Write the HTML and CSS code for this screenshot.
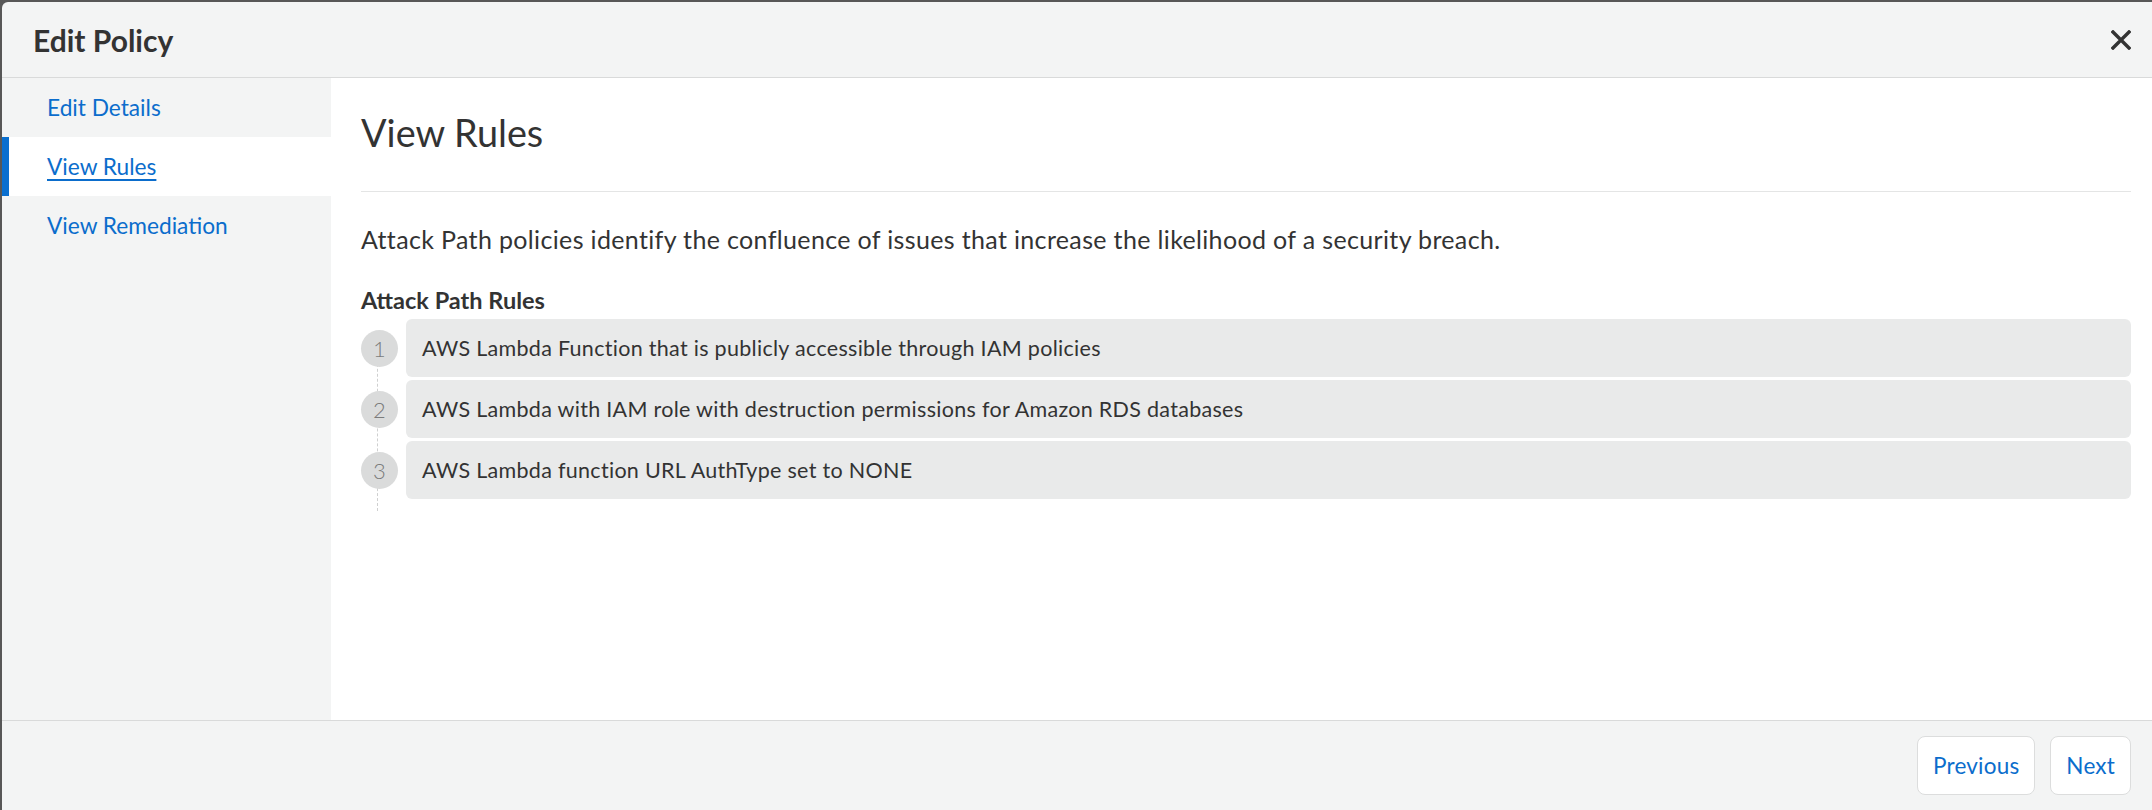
FILE: index.html
```html
<!DOCTYPE html>
<html lang="en">
<head>
<meta charset="utf-8">
<title>Edit Policy</title>
<link rel="stylesheet" href="styles.css">
</head>
<body>
<div class="modal">
  <header class="modal-header">
    <h1 class="modal-title">Edit Policy</h1>
    <button class="close-btn" aria-label="Close">
      <svg width="20" height="20" viewBox="0 0 20 20"><path d="M2 2 L18 18 M18 2 L2 18" stroke="#333" stroke-width="3.4" stroke-linecap="square" fill="none"/></svg>
    </button>
  </header>
  <div class="modal-body">
    <nav class="sidebar">
      <a class="nav-item">Edit Details</a>
      <a class="nav-item active">View Rules</a>
      <a class="nav-item">View Remediation</a>
    </nav>
    <main class="content">
      <h2 class="page-title">View Rules</h2>
      <p class="description">Attack Path policies identify the confluence of issues that increase the likelihood of a security breach.</p>
      <h3 class="rules-title">Attack Path Rules</h3>
      <ol class="rules">
        <li class="rule"><span class="rule-num">1</span><div class="rule-box">AWS Lambda Function that is publicly accessible through IAM policies</div></li>
        <li class="rule"><span class="rule-num">2</span><div class="rule-box">AWS Lambda with IAM role with destruction permissions for Amazon RDS databases</div></li>
        <li class="rule"><span class="rule-num">3</span><div class="rule-box">AWS Lambda function URL AuthType set to NONE</div></li>
      </ol>
    </main>
  </div>
  <footer class="modal-footer">
    <button class="btn">Previous</button>
    <button class="btn">Next</button>
  </footer>
</div>
</body>
</html>
```
FILE: styles.css
```css
* { box-sizing: border-box; }
html, body { margin: 0; padding: 0; }
body {
  background: #575757;
  width: 2152px;
  height: 810px;
  overflow: hidden;
  font-family: Lato, "Noto Sans", sans-serif;
  color: #333;
}
.modal {
  margin: 2px 0 0 2px;
  width: 2150px;
  height: 830px;
  background: #f3f4f4;
  border-radius: 6px 0 0 0;
  display: flex;
  flex-direction: column;
  overflow: hidden;
}
.modal-header {
  height: 76px;
  flex: none;
  display: flex;
  align-items: center;
  justify-content: space-between;
  padding: 0 21px 0 31px;
  border-bottom: 1px solid #d9dada;
}
.modal-title {
  margin: 0;
  font-size: 30px;
  font-weight: 700;
  line-height: 36px;
  color: #333;
}
.close-btn {
  background: none;
  border: 0;
  padding: 0;
  width: 20px;
  height: 20px;
  display: flex;
}
.modal-body {
  height: 642px;
  flex: none;
  display: flex;
}
.sidebar {
  width: 329px;
  flex: none;
  background: #f3f4f4;
  display: flex;
  flex-direction: column;
}
.nav-item {
  height: 59px;
  display: flex;
  align-items: center;
  padding-left: 38px;
  font-size: 22.7px;
  color: #0b6dcc;
  border-left: 7px solid transparent;
}
.nav-item.active {
  background: #fff;
  border-left-color: #0a6fcf;
  text-decoration: underline;
  text-underline-offset: 4px;
}
.content {
  flex: 1;
  background: #fff;
  padding: 32px 21px 0 30px;
}
.page-title {
  margin: 0;
  font-size: 37.8px;
  font-weight: 400;
  line-height: 46px;
  color: #333;
  padding-bottom: 35px;
  border-bottom: 1px solid #e4e5e5;
}
.description {
  margin: 32px 0 0;
  font-size: 25px;
  letter-spacing: 0.35px;
  line-height: 30px;
  color: #333;
}
.rules-title {
  margin: 32px 0 0;
  font-size: 23.5px;
  font-weight: 700;
  line-height: 28px;
  color: #333;
}
.rules {
  list-style: none;
  margin: 5px 0 0;
  padding: 0 0 12px;
  display: flex;
  flex-direction: column;
  gap: 3px;
  position: relative;
}
.rules::before {
  content: "";
  position: absolute;
  left: 16px;
  top: 20px;
  bottom: 0;
  border-left: 1px dashed #cfd0d0;
}
.rule {
  display: flex;
  align-items: center;
  gap: 8px;
}
.rule-num {
  width: 37px;
  height: 37px;
  border-radius: 50%;
  background: #dadbdb;
  color: #7b7b7b;
  font-weight: 300;
  font-size: 22px;
  display: flex;
  align-items: center;
  justify-content: center;
  flex: none;
  position: relative;
  z-index: 1;
}
.rule-box {
  flex: 1;
  height: 58px;
  background: #e9eaea;
  border-radius: 6px;
  display: flex;
  align-items: center;
  padding-left: 16px;
  font-size: 21.5px;
  letter-spacing: 0.3px;
  color: #333;
}
.modal-footer {
  flex: 1;
  border-top: 1px solid #d9dada;
  display: flex;
  justify-content: flex-end;
  align-items: flex-start;
  gap: 15px;
  padding: 15px 21px 0 0;
}
.btn {
  height: 59px;
  background: #fff;
  border: 1px solid #dcdddd;
  border-radius: 8px;
  font-family: Lato, "Noto Sans", sans-serif;
  font-size: 22.5px;
  letter-spacing: 0.2px;
  color: #0b6dcc;
  padding: 0 15px;
}
```
